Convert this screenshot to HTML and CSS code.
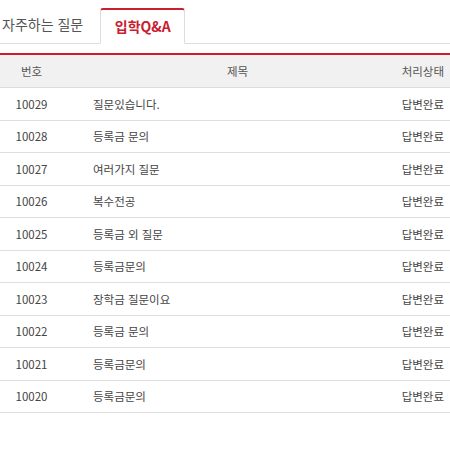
FILE: index.html
```html
<!DOCTYPE html>
<html lang="ko">
<head>
    <meta charset="UTF-8">
    <meta name="viewport" content="width=device-width, initial-scale=1.0">
    <title>입학Q&amp;A</title>
    <link rel="stylesheet" href="styles.css">
</head>
<body>
    <!-- 탭 메뉴 -->
    <ul class="tabs">
        <li class="tab">자주하는 질문</li>
        <li class="tab active">입학Q&amp;A</li>
    </ul>

    <!-- 게시판 목록 -->
    <table class="board">
        <thead>
            <tr>
                <th class="col-num">번호</th>
                <th class="col-title">제목</th>
                <th class="col-state">처리상태</th>
            </tr>
        </thead>
        <tbody>
            <tr><td class="col-num">10029</td><td class="col-title">질문있습니다.</td><td class="col-state">답변완료</td></tr>
            <tr><td class="col-num">10028</td><td class="col-title">등록금 문의</td><td class="col-state">답변완료</td></tr>
            <tr><td class="col-num">10027</td><td class="col-title">여러가지 질문</td><td class="col-state">답변완료</td></tr>
            <tr><td class="col-num">10026</td><td class="col-title">복수전공</td><td class="col-state">답변완료</td></tr>
            <tr><td class="col-num">10025</td><td class="col-title">등록금 외 질문</td><td class="col-state">답변완료</td></tr>
            <tr><td class="col-num">10024</td><td class="col-title">등록금문의</td><td class="col-state">답변완료</td></tr>
            <tr><td class="col-num">10023</td><td class="col-title">장학금 질문이요</td><td class="col-state">답변완료</td></tr>
            <tr><td class="col-num">10022</td><td class="col-title">등록금 문의</td><td class="col-state">답변완료</td></tr>
            <tr><td class="col-num">10021</td><td class="col-title">등록금문의</td><td class="col-state">답변완료</td></tr>
            <tr><td class="col-num">10020</td><td class="col-title">등록금문의</td><td class="col-state">답변완료</td></tr>
        </tbody>
    </table>
</body>
</html>
```

FILE: styles.css
```css
body {
    margin: 0;
    font-family: "Noto Sans CJK KR", "Noto Sans", sans-serif;
    color: #444;
    background-color: #fff;
}

.tabs {
    display: flex;
    list-style: none;
    margin: 0;
    padding: 8px 0 0 0;
    border-bottom: 1px solid #ddd;
}

.tab {
    height: 35px;
    line-height: 33px;
    font-size: 14px;
    color: #555;
    padding: 0 17px 0 2px;
    margin-bottom: -1px;
    white-space: nowrap;
}

.tab.active {
    box-sizing: border-box;
    width: 85px;
    height: 36px;
    padding: 0;
    text-align: center;
    font-weight: bold;
    color: #c8202f;
    background-color: #fff;
    border: 1px solid #ddd;
    border-top: 2px solid #c8202f;
    border-bottom-color: #fff;
    border-radius: 3px 3px 0 0;
}

.board {
    width: 100%;
    margin-top: 9px;
    border-collapse: collapse;
    border-top: 2px solid #c8202f;
    font-size: 11.5px;
}

.board th {
    height: 32px;
    padding: 0;
    font-weight: normal;
    color: #555;
    background-color: #f1f1f1;
    border-bottom: 1px solid #ddd;
}

.board th.col-title {
    padding-left: 58px;
}

.board td {
    height: 31.5px;
    padding: 0;
    color: #444;
    border-bottom: 1px solid #ddd;
}

.col-num {
    width: 63px;
    text-align: center;
}

.board td.col-title {
    padding-left: 30px;
    text-align: left;
}

.col-state {
    width: 90px;
    padding-right: 6px !important;
    text-align: right;
}
```
